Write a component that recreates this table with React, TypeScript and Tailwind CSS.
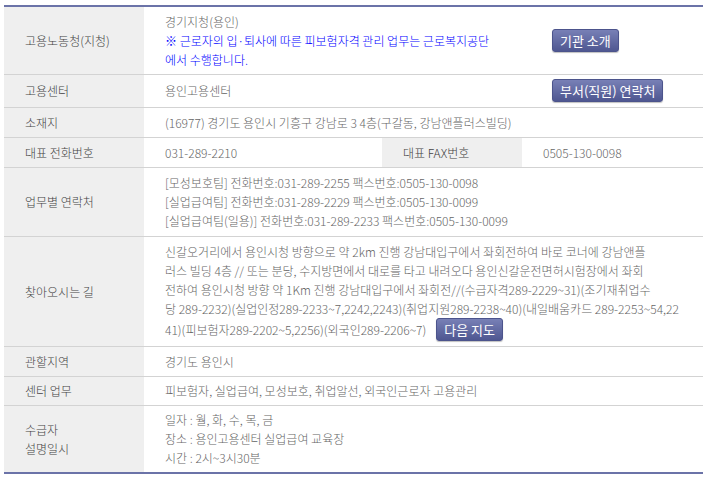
import React, { FC } from "react";

const th =
  "bg-[#efefef] text-[#444] font-light text-left align-middle pl-[21px] py-[4px] border-b border-[#d3d3d3]";
const td =
  "text-[#666] text-left align-middle pl-[21px] py-[4px] border-b border-[#d3d3d3]";

const Btn: FC<{ children: React.ReactNode; className?: string }> = ({
  children,
  className = "",
}) => (
  <span
    className={`inline-flex items-center justify-center h-[23px] px-[7px] rounded-[3px] border border-[#4c548c] bg-gradient-to-b from-[#7880b6] to-[#4f5791] text-white text-[13px] font-normal leading-none shadow-[0_1px_1px_rgba(0,0,0,0.25)] ${className}`}
  >
    {children}
  </span>
);

const directions = [
  "신갈오거리에서 용인시청 방향으로 약 2km 진행 강남대입구에서 좌회전하여 바로 코너에 강남앤플",
  "러스 빌딩 4층 // 또는 분당, 수지방면에서 대로를 타고 내려오다 용인신갈운전면허시험장에서 좌회",
  "전하여 용인시청 방향 약 1Km 진행 강남대입구에서 좌회전//(수급자격289-2229~31)(조기재취업수",
  "당 289-2232)(실업인정289-2233~7,2242,2243)(취업지원289-2238~40)(내일배움카드 289-2253~54,22",
];

const App: FC = () => {
  return (
    <div
      className="bg-white w-[713px] h-[479px] pt-[5px] pl-[4px] text-[12px] leading-[19px] font-light"
      style={{ fontFamily: '"Noto Sans CJK KR", "Noto Sans", sans-serif' }}
    >
      <table className="w-[699px] table-fixed border-collapse border-t-2 border-b-2 border-t-[#6b73a8] border-b-[#6b73a8]">
        <colgroup>
          <col className="w-[140px]" />
          <col className="w-[238px]" />
          <col className="w-[140px]" />
          <col className="w-[181px]" />
        </colgroup>
        <tbody>
          <tr>
            <th className={`${th} h-[68px]`}>고용노동청(지청)</th>
            <td className={td} colSpan={2}>
              <div className="whitespace-nowrap">경기지청(용인)</div>
              <div className="whitespace-nowrap text-[#0000ff]">
                ※ 근로자의 입·퇴사에 따른 피보험자격 관리 업무는 근로복지공단
              </div>
              <div className="whitespace-nowrap text-[#0000ff]">
                에서 수행합니다.
              </div>
            </td>
            <td className="align-middle pl-[30px] border-b border-[#d3d3d3]">
              <Btn>기관 소개</Btn>
            </td>
          </tr>
          <tr>
            <th className={`${th} h-[33px]`}>고용센터</th>
            <td className={td} colSpan={2}>
              용인고용센터
            </td>
            <td className="align-middle pl-[30px] border-b border-[#d3d3d3]">
              <Btn>부서(직원) 연락처</Btn>
            </td>
          </tr>
          <tr>
            <th className={`${th} h-[30px]`}>소재지</th>
            <td className={td} colSpan={3}>
              (16977) 경기도 용인시 기흥구 강남로 3 4층(구갈동, 강남앤플러스빌딩)
            </td>
          </tr>
          <tr>
            <th className={`${th} h-[30px]`}>대표 전화번호</th>
            <td className={td}>031-289-2210</td>
            <th className={th}>대표 FAX번호</th>
            <td className={td}>0505-130-0098</td>
          </tr>
          <tr>
            <th className={`${th} h-[69px]`}>업무별 연락처</th>
            <td className={td} colSpan={3}>
              <div>[모성보호팀] 전화번호:031-289-2255 팩스번호:0505-130-0098</div>
              <div>[실업급여팀] 전화번호:031-289-2229 팩스번호:0505-130-0099</div>
              <div>
                [실업급여팀(일용)] 전화번호:031-289-2233 팩스번호:0505-130-0099
              </div>
            </td>
          </tr>
          <tr>
            <th className={`${th} h-[110px]`}>찾아오시는 길</th>
            <td className={`${td} pr-0`} colSpan={3}>
              {directions.map((line) => (
                <div key={line} className="whitespace-nowrap">
                  {line}
                </div>
              ))}
              <div className="whitespace-nowrap flex items-center h-[23px]">
                <span>41)(피보험자289-2202~5,2256)(외국인289-2206~7)</span>
                <Btn className="ml-[10px] h-[22px]">다음 지도</Btn>
              </div>
            </td>
          </tr>
          <tr>
            <th className={`${th} h-[30px]`}>관할지역</th>
            <td className={td} colSpan={3}>
              경기도 용인시
            </td>
          </tr>
          <tr>
            <th className={`${th} h-[29px]`}>센터 업무</th>
            <td className={td} colSpan={3}>
              피보험자, 실업급여, 모성보호, 취업알선, 외국인근로자 고용관리
            </td>
          </tr>
          <tr>
            <th className={`${th} h-[68px] border-b-0`}>
              <div>수급자</div>
              <div>설명일시</div>
            </th>
            <td className={`${td} border-b-0`} colSpan={3}>
              <div>일자 : 월, 화, 수, 목, 금</div>
              <div>장소 : 용인고용센터 실업급여 교육장</div>
              <div>시간 : 2시~3시30분</div>
            </td>
          </tr>
        </tbody>
      </table>
    </div>
  );
};

export default App;
